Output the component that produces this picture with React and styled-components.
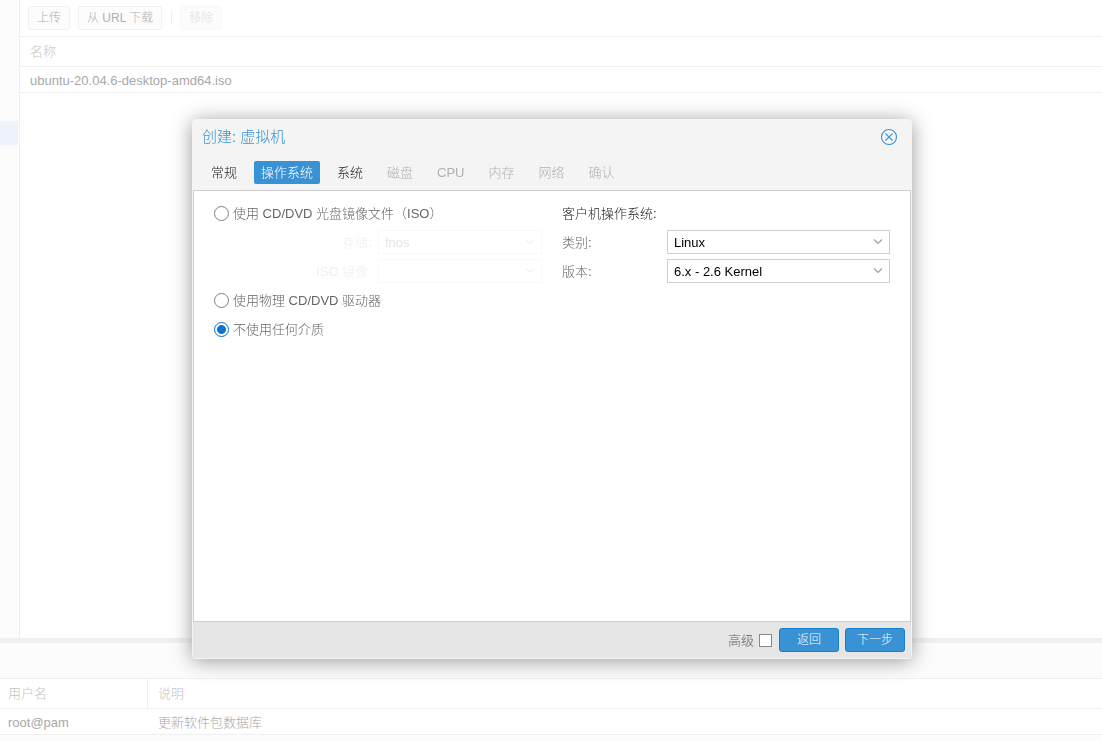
import styled, { createGlobalStyle, css } from "styled-components"
import { useState } from "react"

const GlobalStyle = createGlobalStyle`
*{
box-sizing:border-box;
}
body{
margin:0;
overflow:hidden;
font-family:"Liberation Sans", "Noto Sans CJK SC", sans-serif;
font-size:13px;
font-weight:300;
line-height:17px;
}
button, select, input{
font-family:inherit;
font-size:inherit;
font-weight:inherit;
line-height:inherit;
}
`

const Page = styled.div`
display:flex;
flex-direction:column;
height:100vh;
background-color:#fff;
`

// Resource tree and storage content
const Top = styled.div`
display:flex;
flex:1;
min-height:0;
`
const Sidebar = styled.div`
width:20px;
padding-top:121px;
background-color:#fcfcfc;
border-right:1px solid #efefef;
`
const SelectedNode = styled.div`
height:24px;
margin-right:1px;
background-color:#ecf3fb;
`
const Content = styled.main`
flex:1;
`
const Toolbar = styled.div`
display:flex;
align-items:center;
gap:8px;
height:37px;
padding:0 8px;
border-bottom:1px solid #efefef;
`
const ToolButton = styled.button`
height:24px;
padding:0 8px;
font-size:12px;
color:#b0b0b0;
background-color:#fcfcfc;
border:1px solid #f1f1f1;
border-radius:3px;
&:disabled{
color:#dedede;
border-color:#f8f8f8;
}
`
const Separator = styled.div`
width:2px;
height:14px;
border-right:1px solid #f0f0f0;
`
const Table = styled.table`
width:100%;
border-spacing:0;
table-layout:fixed;
`
const Th = styled.th`
width:${props => props.$width || "auto"};
height:30px;
padding:0 10px 0 ${props => props.$first ? "8px" : "10px"};
font-weight:300;
text-align:left;
color:#c4c4c4;
border-bottom:1px solid #efefef;
border-right:${props => props.$divider ? "1px solid #efefef" : "none"};
`
const Td = styled.td`
height:26px;
padding:2px 10px 0 ${props => props.$first ? "8px" : "10px"};
color:#a8a8a8;
border-bottom:1px solid #efefef;
`

// Task log
const Log = styled.section`
height:103px;
background-color:#fcfcfc;
border-top:5px solid #efefef;
`
const LogTabs = styled.div`
height:36px;
border-bottom:1px solid #efefef;
`
const LogTable = styled(Table)`
background-color:#fff;
`

// Wizard window
const Overlay = styled.div`
position:fixed;
inset:0;
display:flex;
justify-content:center;
align-items:flex-start;
padding:119px 0 0 2px;
`
const Window = styled.div`
display:flex;
flex-direction:column;
width:720px;
max-width:100%;
background-color:#f4f4f4;
border:1px solid #f4f4f4;
border-radius:4px;
box-shadow:0 2px 20px #999;
`
const Header = styled.div`
display:flex;
justify-content:space-between;
align-items:center;
height:41px;
padding:0 13px 8px 9px;
`
const Title = styled.h1`
margin:0;
font-size:15px;
font-weight:300;
line-height:20px;
color:#3892d4;
`
const Close = styled.button`
display:flex;
padding:0;
background:none;
border:none;
color:#3892d4;
`
const Tabs = styled.div`
display:flex;
gap:10px;
padding:0 11px 6px;
`
const Tab = styled.button`
height:23px;
padding:0 7px;
color:#222;
background:none;
border:none;
border-radius:2px;
${props => props.$active && css`
color:#fff;
background-color:#3892d4;
`}
&:disabled{
color:#b0b0b0;
}
`
const Body = styled.form`
display:grid;
grid-template-columns:1fr 1fr;
align-items:start;
gap:20px;
min-height:432px;
padding:10px 20px;
background-color:#fff;
border:1px solid #cfcfcf;
`
const Column = styled.div`
display:flex;
flex-direction:column;
gap:5px;
`
const Option = styled.label`
display:flex;
align-items:center;
gap:4px;
height:24px;
color:#666;
`
const Radio = styled.input`
appearance:none;
width:15px;
height:15px;
margin:0;
background-color:#fff;
border:1px solid #808080;
border-radius:50%;
&:checked{
border-color:#0f6fc5;
background-image:radial-gradient(circle, #0f72cc 4px, transparent 5px);
}
`
const Heading = styled.div`
height:24px;
line-height:25px;
color:#222;
`
const Field = styled.div`
display:flex;
align-items:center;
height:24px;
opacity:${props => props.$masked ? 0.1 : 1};
`
const FieldLabel = styled.label`
width:${props => props.$wide ? "164px" : "105px"};
padding-right:6px;
text-align:${props => props.$wide ? "right" : "left"};
color:#666;
`
const SelectBox = styled.div`
display:grid;
flex:1;
align-items:center;
`
const Select = styled.select`
grid-area:1 / 1;
appearance:none;
width:100%;
height:24px;
padding:0 24px 0 6px;
color:#000;
opacity:1;
background-color:#fff;
border:1px solid #cfcfcf;
border-radius:0;
`
const Arrow = styled.svg`
grid-area:1 / 1;
justify-self:end;
margin-right:7px;
pointer-events:none;
`
const Footer = styled.div`
display:flex;
justify-content:flex-end;
align-items:center;
gap:6px;
height:36px;
padding-right:6px;
background-color:#e6e6e6;
border-radius:0 0 3px 3px;
`
const Advanced = styled.label`
display:flex;
align-items:center;
gap:5px;
padding-right:1px;
color:#666;
`
const Checkbox = styled.input`
appearance:none;
width:13px;
height:13px;
margin:0;
background-color:#fff;
border:1px solid #888;
&:checked{
background-color:#3892d4;
}
`
const FooterButton = styled.button`
width:60px;
height:24px;
padding:0;
font-size:12px;
color:#fff;
background-color:#3892d4;
border:1px solid #157fcc;
border-radius:3px;
`

const tabs = [
    { name: "常规" },
    { name: "操作系统", active: true },
    { name: "系统" },
    { name: "磁盘", disabled: true },
    { name: "CPU", disabled: true },
    { name: "内存", disabled: true },
    { name: "网络", disabled: true },
    { name: "确认", disabled: true },
]

function Combo({ id, label, value, masked }) {
    return (
        <Field $masked={masked}>
            <FieldLabel htmlFor={id} $wide={masked !== undefined}>{label}:</FieldLabel>
            <SelectBox>
                <Select id={id} disabled={masked}>
                    <option>{value}</option>
                </Select>
                <Arrow width="10" height="8" viewBox="0 0 10 8" fill="none" stroke="#a0a0a0" strokeWidth="1.2">
                    <path d="M1 1.5L5 5.5L9 1.5" />
                </Arrow>
            </SelectBox>
        </Field>
    )
}

function StorageContent() {
    return (
        <Content>
            <Toolbar>
                <ToolButton>上传</ToolButton>
                <ToolButton>从 URL 下载</ToolButton>
                <Separator />
                <ToolButton disabled>移除</ToolButton>
            </Toolbar>
            <Table>
                <thead>
                    <tr><Th>名称</Th></tr>
                </thead>
                <tbody>
                    <tr><Td>ubuntu-20.04.6-desktop-amd64.iso</Td></tr>
                </tbody>
            </Table>
        </Content>
    )
}

function TaskLog() {
    return (
        <Log>
            <LogTabs />
            <LogTable>
                <thead>
                    <tr>
                        <Th $first $divider $width="148px">用户名</Th>
                        <Th>说明</Th>
                    </tr>
                </thead>
                <tbody>
                    <tr>
                        <Td $first>root@pam</Td>
                        <Td>更新软件包数据库</Td>
                    </tr>
                </tbody>
            </LogTable>
        </Log>
    )
}

function CreateVm() {
    // install medium: iso, cdrom or none
    const [media, setMedia] = useState("none")
    const handleMedia = (e) => setMedia(e.target.value)

    return (
        <Overlay>
            <Window role="dialog" aria-labelledby="wizard-title">
                <Header>
                    <Title id="wizard-title">创建: 虚拟机</Title>
                    <Close aria-label="关闭">
                        <svg width="18" height="18" viewBox="0 0 18 18" fill="none" stroke="currentColor">
                            <circle cx="9" cy="9" r="7.5" strokeWidth="1.1" />
                            <path d="M5.5 5.5L12.5 12.5M12.5 5.5L5.5 12.5" strokeWidth="1.1" />
                        </svg>
                    </Close>
                </Header>
                <Tabs>
                    {tabs.map((tab) => (
                        <Tab key={tab.name} $active={tab.active} disabled={tab.disabled}>{tab.name}</Tab>
                    ))}
                </Tabs>
                <Body>
                    <Column>
                        <Option>
                            <Radio type="radio" name="media" value="iso" checked={media === "iso"} onChange={handleMedia} />
                            使用 CD/DVD 光盘镜像文件（ISO）
                        </Option>
                        <Combo id="storage" label="存储" value="fnos" masked={media !== "iso"} />
                        <Combo id="image" label="ISO 镜像" value="" masked={media !== "iso"} />
                        <Option>
                            <Radio type="radio" name="media" value="cdrom" checked={media === "cdrom"} onChange={handleMedia} />
                            使用物理 CD/DVD 驱动器
                        </Option>
                        <Option>
                            <Radio type="radio" name="media" value="none" checked={media === "none"} onChange={handleMedia} />
                            不使用任何介质
                        </Option>
                    </Column>
                    <Column>
                        <Heading>客户机操作系统:</Heading>
                        <Combo id="ostype" label="类别" value="Linux" />
                        <Combo id="version" label="版本" value="6.x - 2.6 Kernel" />
                    </Column>
                </Body>
                <Footer>
                    <Advanced>
                        高级
                        <Checkbox type="checkbox" />
                    </Advanced>
                    <FooterButton>返回</FooterButton>
                    <FooterButton>下一步</FooterButton>
                </Footer>
            </Window>
        </Overlay>
    )
}

export default function App() {
    return (
        <Page>
            <GlobalStyle />
            <Top>
                <Sidebar>
                    <SelectedNode />
                </Sidebar>
                <StorageContent />
            </Top>
            <TaskLog />
            <CreateVm />
        </Page>
    )
}
